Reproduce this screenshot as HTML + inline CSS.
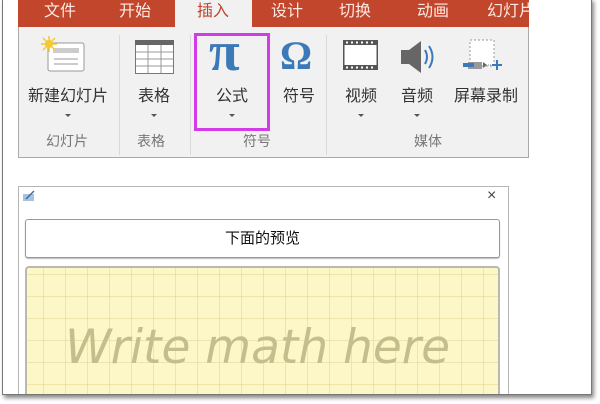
<!DOCTYPE html>
<html><head><meta charset="utf-8"><style>
*{margin:0;padding:0;box-sizing:border-box}
body{width:600px;height:404px;background:#fff;position:relative;overflow:hidden;font-family:"Liberation Sans","Noto Sans CJK SC",sans-serif}
.abs{position:absolute}
.page{left:2px;top:-2px;width:590px;height:397px;border:1px solid #777;border-top:none;background:#fff;box-shadow:2px 3px 4px #888;overflow:hidden}
.tabs{left:15px;top:2px;width:511px;height:27px;background:#c1462c}
.tab{top:4px;font-size:16px;color:#fde9e2;line-height:20px}
.rib{left:15px;top:29px;width:511px;height:131px;background:#f1f1f1;border:1px solid #aaa;border-top:none}
.lbl{font-size:16px;color:#333;line-height:18px;text-align:center;white-space:nowrap}
.g{font-size:14px;color:#777;top:134px;line-height:18px}
.arr{width:0;height:0;border-left:3px solid transparent;border-right:3px solid transparent;border-top:3px solid #555}
.sep{top:37px;width:1px;height:120px;background:#d8d8d8}
.dlg{left:15px;top:188px;width:491px;height:220px;border:1px solid #b5b5b5;background:#fff}
.grid{left:22px;top:268px;width:475px;height:140px;border:2px solid #b9b9b0;border-radius:4px;
background-color:#fdf6c6;background-image:linear-gradient(90deg,rgba(220,205,140,.45) 1px,transparent 1px),linear-gradient(rgba(220,205,140,.45) 1px,transparent 1px);background-size:22px 22px;background-position:16px 6px}
</style></head><body>
<div class="abs page">
<div class="abs tabs"></div>
<div class="abs" style="left:172px;top:2px;width:77px;height:28px;background:#f1f1f1"></div>
<div class="abs tab" style="left:41px">文件</div>
<div class="abs tab" style="left:116px">开始</div>
<div class="abs tab" style="left:194px;color:#c1462c">插入</div>
<div class="abs tab" style="left:268px">设计</div>
<div class="abs tab" style="left:336px">切换</div>
<div class="abs tab" style="left:414px">动画</div>
<div class="abs tab" style="left:484px;width:42px;overflow:hidden;white-space:nowrap">幻灯片</div>
<div class="abs rib"></div>
<svg class="abs" style="left:38px;top:38px" width="46" height="38"><rect x="7" y="7" width="36" height="28" rx="2" fill="#fff" stroke="#999"/><rect x="12" y="12" width="26" height="5" fill="#ccc"/><line x1="13" y1="23" x2="37" y2="23" stroke="#999"/><line x1="13" y1="28" x2="37" y2="28" stroke="#999"/><circle cx="8" cy="8" r="4" fill="#f5c830"/><g stroke="#f5c830" stroke-width="1.5"><line x1="8" y1="0" x2="8" y2="16"/><line x1="0" y1="8" x2="16" y2="8"/><line x1="2" y1="2" x2="14" y2="14"/><line x1="14" y1="2" x2="2" y2="14"/></g></svg>
<div class="abs lbl" style="left:20px;top:90px;width:90px">新建幻灯片</div>
<div class="abs arr" style="left:62px;top:116px"></div>
<div class="abs g" style="left:43px">幻灯片</div>
<div class="abs sep" style="left:116px"></div>
<svg class="abs" style="left:132px;top:42px" width="40" height="36"><rect x="0.5" y="0.5" width="38" height="33" fill="#fff" stroke="#777"/><rect x="0" y="0" width="39" height="5" fill="#666"/><g stroke="#999"><line x1="1" y1="12" x2="38" y2="12"/><line x1="1" y1="19" x2="38" y2="19"/><line x1="1" y1="26" x2="38" y2="26"/><line x1="13" y1="5" x2="13" y2="33"/><line x1="26" y1="5" x2="26" y2="33"/></g></svg>
<div class="abs lbl" style="left:126px;top:90px;width:50px">表格</div>
<div class="abs arr" style="left:148px;top:116px"></div>
<div class="abs g" style="left:134px">表格</div>
<div class="abs sep" style="left:187px"></div>
<div class="abs" style="left:191px;top:35px;width:76px;height:98px;border:3px solid #d23be6"></div>
<div class="abs" style="left:206px;top:26px;font-family:'Liberation Serif',serif;font-size:56px;font-weight:bold;color:#3c79b8;line-height:56px">π</div>
<div class="abs lbl" style="left:204px;top:90px;width:50px">公式</div>
<div class="abs arr" style="left:226px;top:116px"></div>
<div class="abs" style="left:277px;top:34px;font-family:'Liberation Serif',serif;font-size:40px;font-weight:bold;color:#3c79b8;line-height:48px">Ω</div>
<div class="abs lbl" style="left:271px;top:90px;width:50px">符号</div>
<div class="abs g" style="left:240px">符号</div>
<div class="abs sep" style="left:323px"></div>
<svg class="abs" style="left:340px;top:42px" width="36" height="32"><rect x="0" y="0" width="35" height="30" fill="#555"/><rect x="1.5" y="5" width="32" height="20" fill="#fff"/><g fill="#fff"><rect x="3" y="1.5" width="2" height="2"/><rect x="8" y="1.5" width="2" height="2"/><rect x="13" y="1.5" width="2" height="2"/><rect x="18" y="1.5" width="2" height="2"/><rect x="23" y="1.5" width="2" height="2"/><rect x="28" y="1.5" width="2" height="2"/><rect x="3" y="26.5" width="2" height="2"/><rect x="8" y="26.5" width="2" height="2"/><rect x="13" y="26.5" width="2" height="2"/><rect x="18" y="26.5" width="2" height="2"/><rect x="23" y="26.5" width="2" height="2"/><rect x="28" y="26.5" width="2" height="2"/></g></svg>
<div class="abs lbl" style="left:333px;top:90px;width:50px">视频</div>
<div class="abs arr" style="left:355px;top:116px"></div>
<svg class="abs" style="left:396px;top:42px" width="40" height="34"><path d="M2 10h8l12-9v32l-12-9H2z" fill="#666"/><path d="M26 10q4 7 0 14" stroke="#3c79b8" stroke-width="2" fill="none"/><path d="M30 6q7 11 0 22" stroke="#3c79b8" stroke-width="2" fill="none"/></svg>
<div class="abs lbl" style="left:389px;top:90px;width:50px">音频</div>
<div class="abs arr" style="left:411px;top:116px"></div>
<svg class="abs" style="left:460px;top:38px" width="46" height="40"><rect x="7" y="4" width="24" height="26" fill="#fff" stroke="#999" stroke-dasharray="2 2"/><rect x="5" y="26" width="14" height="7" fill="#999"/><rect x="0" y="27" width="11" height="4" fill="#3c79b8"/><path d="M20 26l4 3-4 3z" fill="#666"/><line x1="25" y1="29" x2="29" y2="29" stroke="#888" stroke-dasharray="1 1"/><path d="M34 24v10M29 29h10" stroke="#3c79b8" stroke-width="2"/></svg>
<div class="abs lbl" style="left:448px;top:90px;width:70px">屏幕录制</div>
<div class="abs g" style="left:411px">媒体</div>
<div class="abs dlg"></div>
<svg class="abs" style="left:20px;top:192px" width="12" height="12"><rect x="0" y="4" width="11" height="7" fill="#a9c3dd"/><path d="M3 9l8-8" stroke="#3a6ea5" stroke-width="1.5"/></svg>
<div class="abs" style="left:484px;top:189px;font-size:16px;color:#444">×</div>
<div class="abs" style="left:22px;top:221px;width:475px;height:39px;border:1px solid #999;border-radius:3px;box-shadow:0 1px 1px #bbb;background:#fff;text-align:center;font-size:15px;line-height:37px;color:#111">下面的预览</div>
<div class="abs grid"></div>
<div class="abs" style="left:62px;top:322px;font-family:'DejaVu Sans',cursive;font-style:italic;font-size:47px;color:#c4bd8c;line-height:56px;letter-spacing:0px;white-space:nowrap">Write math here</div>
</div>
</body></html>
